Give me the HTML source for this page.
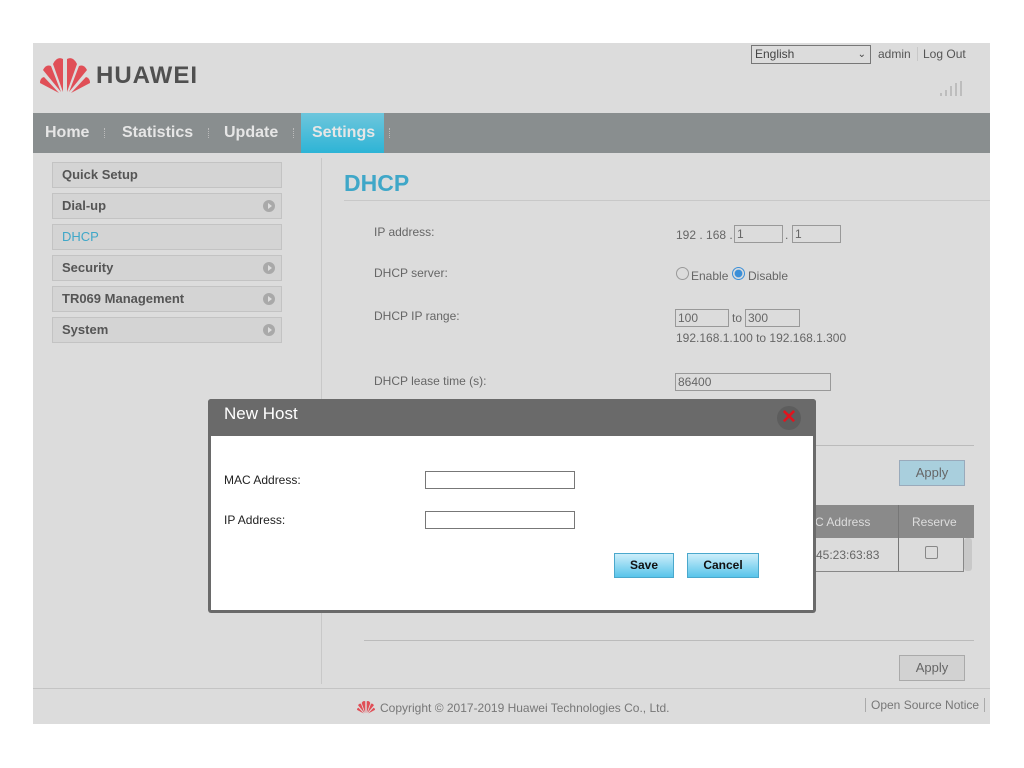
<!DOCTYPE html><html><head><style>
body{margin:0;width:1024px;height:768px;background:#fff;position:relative;font-family:"Liberation Sans",sans-serif;overflow:hidden}
.a{position:absolute}
#pg{left:33px;top:43px;width:957px;height:681px;background:#dcdcdc}
.nav{left:33px;top:113px;width:957px;height:40px;background:#898e8f}
.nv{top:113px;height:40px;line-height:40px;color:#e6e6e6;font-weight:bold;font-size:16px}
.sep{top:128px;width:1px;height:10px;border-left:1px dotted #bbb}
.si{left:52px;width:228px;height:24px;border:1px solid #c3c3c3;background:#d4d4d4;font-size:13px;font-weight:bold;color:#555;line-height:24px;text-indent:9px}
.ar{position:absolute;right:6px;top:6px;width:12px;height:12px;border-radius:50%;background:#a9a9a9}
.ar:after{content:"";position:absolute;left:5px;top:3px;border-left:4px solid #ddd;border-top:3px solid transparent;border-bottom:3px solid transparent}
.lb{left:374px;font-size:12px;color:#666}
.in{border:1px solid #999;background:#dcdcdc;height:16px;font-size:12px;color:#666;line-height:16px;text-indent:2px}
.t{font-size:12px;color:#666}
.btn{width:64px;height:24px;border:1px solid #aaa;background:#d2d2d2;font-size:13px;color:#666;text-align:center;line-height:24px}
</style></head><body>
<div class="a" id="pg"></div>
<svg class="a" style="left:40px;top:56px" width="50" height="38" viewBox="0 0 50 38"><g fill="#e04f57"><path d="M23 36 L13 8 Q17 0 23 3Z"/><path d="M27 36 L37 8 Q33 0 27 3Z"/><path d="M21 36 L3 14 Q6 8 11 10Z"/><path d="M29 36 L47 14 Q44 8 39 10Z"/><path d="M19 37 L0 27 Q0 22 4 21Z"/><path d="M31 37 L50 27 Q50 22 46 21Z"/></g></svg>
<div class="a" style="left:96px;top:62px;font-size:24px;font-weight:bold;color:#505050;letter-spacing:1px">HUAWEI</div>
<div class="a" style="left:751px;top:45px;width:118px;height:17px;border:1px solid #777;font-size:12px;color:#444;line-height:17px;text-indent:3px">English<span style="position:absolute;right:4px;font-size:10px">&#8964;</span></div>
<div class="a t" style="left:878px;top:47px;color:#555">admin</div>
<div class="a t" style="left:917px;top:47px;border-left:1px solid #c8c8c8;padding-left:5px;color:#555">Log Out</div>
<svg class="a" style="left:939px;top:80px" width="26" height="17"><g fill="#bdbdbd"><rect x="1" y="13" width="2" height="3"/><rect x="6" y="10" width="2" height="6"/><rect x="11" y="6" width="2" height="10"/><rect x="16" y="3" width="2" height="13"/><rect x="21" y="1" width="2" height="15"/></g></svg>
<div class="a nav"></div>
<div class="a" style="left:301px;top:113px;width:83px;height:40px;background:linear-gradient(#6ec6dc,#2db4d6)"></div>
<div class="a nv" style="left:45px">Home</div><div class="a sep" style="left:104px"></div>
<div class="a nv" style="left:122px">Statistics</div><div class="a sep" style="left:208px"></div>
<div class="a nv" style="left:224px">Update</div><div class="a sep" style="left:293px"></div>
<div class="a nv" style="left:312px">Settings</div><div class="a sep" style="left:389px"></div>
<div class="a si" style="top:162px">Quick Setup</div>
<div class="a si" style="top:193px">Dial-up<span class="ar"></span></div>
<div class="a si" style="top:224px;color:#3fa7c8;font-weight:normal">DHCP</div>
<div class="a si" style="top:255px">Security<span class="ar"></span></div>
<div class="a si" style="top:286px">TR069 Management<span class="ar"></span></div>
<div class="a si" style="top:317px">System<span class="ar"></span></div>
<div class="a" style="left:321px;top:158px;width:1px;height:526px;background:#c8c8c8"></div>
<div class="a" style="left:344px;top:170px;font-size:23px;font-weight:bold;color:#3fa7c8">DHCP</div>
<div class="a" style="left:344px;top:200px;width:646px;height:1px;background:#c8c8c8"></div>
<div class="a lb" style="top:225px">IP address:</div>
<div class="a t" style="left:676px;top:228px">192 . 168 .</div>
<div class="a in" style="left:734px;top:225px;width:47px">1</div>
<div class="a t" style="left:785px;top:228px">.</div>
<div class="a in" style="left:792px;top:225px;width:47px">1</div>
<div class="a lb" style="top:266px">DHCP server:</div>
<div class="a" style="left:676px;top:267px;width:11px;height:11px;border:1px solid #999;border-radius:50%"></div>
<div class="a t" style="left:691px;top:269px">Enable</div>
<div class="a" style="left:732px;top:267px;width:11px;height:11px;border:1px solid #3b8fd8;border-radius:50%;background:radial-gradient(#3b8fd8 45%,#dcdcdc 55%)"></div>
<div class="a t" style="left:748px;top:269px">Disable</div>
<div class="a lb" style="top:309px">DHCP IP range:</div>
<div class="a in" style="left:675px;top:309px;width:52px">100</div>
<div class="a t" style="left:732px;top:311px">to</div>
<div class="a in" style="left:745px;top:309px;width:53px">300</div>
<div class="a t" style="left:676px;top:331px">192.168.1.100 to 192.168.1.300</div>
<div class="a lb" style="top:374px">DHCP lease time (s):</div>
<div class="a in" style="left:675px;top:373px;width:154px">86400</div>
<div class="a" style="left:364px;top:445px;width:610px;height:1px;background:#bbb"></div>
<div class="a btn" style="left:899px;top:460px;background:#a9cfdd;border-color:#9ab">Apply</div>
<div class="a" style="left:780px;top:505px;width:194px;height:33px;background:#8a8a8a"></div>
<div class="a" style="left:898px;top:505px;width:1px;height:67px;background:#777"></div>
<div class="a" style="left:815px;top:515px;font-size:12px;color:#ddd">C Address</div>
<div class="a" style="left:912px;top:515px;font-size:12px;color:#ddd">Reserve</div>
<div class="a" style="left:780px;top:538px;width:183px;height:33px;border-bottom:1px solid #888;border-right:1px solid #888"></div>
<div class="a t" style="left:816px;top:548px">45:23:63:83</div>
<div class="a" style="left:925px;top:546px;width:11px;height:11px;border:1px solid #888;border-radius:2px"></div>
<div class="a" style="left:964px;top:538px;width:8px;height:33px;background:#c8c8c8;border-radius:3px"></div>
<div class="a" style="left:364px;top:640px;width:610px;height:1px;background:#bbb"></div>
<div class="a btn" style="left:899px;top:655px">Apply</div>
<div class="a" style="left:33px;top:688px;width:957px;height:1px;background:#c4c4c4"></div>
<svg class="a" style="left:357px;top:700px" width="18" height="14" viewBox="0 0 50 38"><g fill="#e04f57"><path d="M23 36 L13 8 Q17 0 23 3Z"/><path d="M27 36 L37 8 Q33 0 27 3Z"/><path d="M21 36 L3 14 Q6 8 11 10Z"/><path d="M29 36 L47 14 Q44 8 39 10Z"/><path d="M19 37 L0 27 Q0 22 4 21Z"/><path d="M31 37 L50 27 Q50 22 46 21Z"/></g></svg>
<div class="a t" style="left:380px;top:701px;color:#777">Copyright © 2017-2019 Huawei Technologies Co., Ltd.</div>
<div class="a t" style="left:865px;top:698px;color:#777;border-left:1px solid #aaa;border-right:1px solid #aaa;padding:0 5px">Open Source Notice</div>
<div class="a" style="left:208px;top:399px;width:608px;height:214px;background:#fff;border-radius:3px;box-shadow:0 0 0 3px #6a6a6a inset"></div>
<div class="a" style="left:208px;top:399px;width:608px;height:37px;background:#6a6a6a;border-radius:3px 3px 0 0"></div>
<div class="a" style="left:224px;top:404px;font-size:17px;color:#fff">New Host</div>
<div class="a" style="left:777px;top:406px;width:24px;height:24px;border-radius:50%;background:#5d5d5d;color:#e0141e;font-size:19px;line-height:24px;text-align:center;font-weight:bold">✕</div>
<div class="a" style="left:224px;top:473px;font-size:12px;color:#222">MAC Address:</div>
<div class="a" style="left:425px;top:471px;width:148px;height:16px;border:1px solid #777"></div>
<div class="a" style="left:224px;top:513px;font-size:12px;color:#222">IP Address:</div>
<div class="a" style="left:425px;top:511px;width:148px;height:16px;border:1px solid #777"></div>
<div class="a" style="left:614px;top:553px;width:58px;height:23px;border:1px solid #4aa8cc;background:linear-gradient(#cdeefa,#58c4ea);font-size:12px;font-weight:bold;text-align:center;line-height:23px;color:#111">Save</div>
<div class="a" style="left:687px;top:553px;width:70px;height:23px;border:1px solid #4aa8cc;background:linear-gradient(#cdeefa,#58c4ea);font-size:12px;font-weight:bold;text-align:center;line-height:23px;color:#111">Cancel</div>
</body></html>
